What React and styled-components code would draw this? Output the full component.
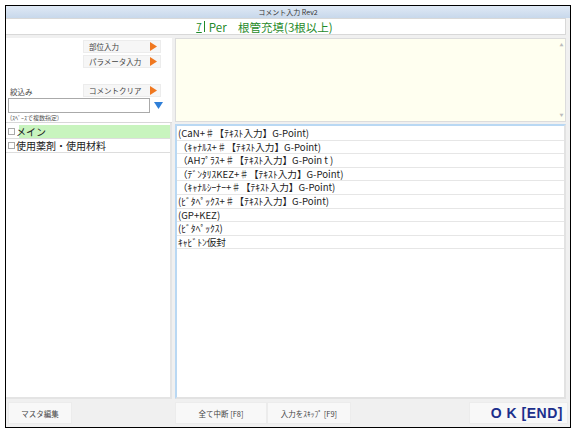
import React from "react";
import styled, { createGlobalStyle } from "styled-components";

const GlobalStyle = createGlobalStyle`
    html, body {
        margin: 0;
        padding: 0;
        background: #ffffff;
    }
    body {
        font-family: "Noto Sans CJK JP", "Noto Sans", sans-serif;
        color: #222;
    }
`;

const comments = [
    "(CaN+♯【ﾃｷｽﾄ入力】G-Point)",
    "（ｷｬﾅﾙｽ+♯【ﾃｷｽﾄ入力】G-Point)",
    "（AHﾌﾟﾗｽ+♯【ﾃｷｽﾄ入力】G-Poin t )",
    "（ﾃﾞﾝﾀﾘｽKEZ+♯【ﾃｷｽﾄ入力】G-Point)",
    "（ｷｬﾅﾙｼｰﾅｰ+♯【ﾃｷｽﾄ入力】G-Point)",
    "(ﾋﾞﾀﾍﾟｯｸｽ+♯【ﾃｷｽﾄ入力】G-Point)",
    "(GP+KEZ)",
    "(ﾋﾞﾀﾍﾟｯｸｽ)",
    "ｷｬﾋﾞﾄﾝ仮封",
];

function Arrow() {
    return (
        <svg width="7" height="9" viewBox="0 0 7 9">
            <path d="M0 0 L7 4.5 L0 9 Z" fill="#f07820" />
        </svg>
    );
}

function DownArrow() {
    return (
        <svg width="9" height="7" viewBox="0 0 9 7">
            <path d="M0 0 L9 0 L4.5 7 Z" fill="#2f7fd8" />
        </svg>
    );
}

export default function App() {
    return (
        <>
            <GlobalStyle />
            <Window>
                <TitleBar>コメント入力 Rev2</TitleBar>
                <Header>
                    <Tooth>7</Tooth>
                    <span>Per　根管充填(3根以上)</span>
                </Header>
                <Main>
                    <LeftPanel>
                        <Controls>
                            <ButtonStack>
                                <SideButton>
                                    <span>部位入力</span>
                                    <Arrow />
                                </SideButton>
                                <SideButton>
                                    <span>パラメータ入力</span>
                                    <Arrow />
                                </SideButton>
                            </ButtonStack>
                            <FilterRow>
                                <FilterLabel>絞込み</FilterLabel>
                                <SideButton>
                                    <span>コメントクリア</span>
                                    <Arrow />
                                </SideButton>
                            </FilterRow>
                            <InputRow>
                                <FilterInput />
                                <DownArrow />
                            </InputRow>
                            <Hint>(ｽﾍﾟｰｽで複数指定)</Hint>
                        </Controls>
                        <CategoryList>
                            <Category $active>
                                <Check />
                                メイン
                            </Category>
                            <Category>
                                <Check />
                                使用薬剤・使用材料
                            </Category>
                        </CategoryList>
                    </LeftPanel>
                    <RightPanel>
                        <Memo>
                            <MemoScroll>
                                <span>▲</span>
                                <span>▼</span>
                            </MemoScroll>
                        </Memo>
                        <CommentList>
                            {comments.map((c, i) => (
                                <CommentRow key={i}>{c}</CommentRow>
                            ))}
                        </CommentList>
                    </RightPanel>
                </Main>
                <Footer>
                    <FooterButton $width={64}>マスタ編集</FooterButton>
                    <FooterGap $width={103} />
                    <FooterButton $width={92}>全て中断 [F8]</FooterButton>
                    <FooterButton $width={84}>入力をｽｷｯﾌﾟ [F9]</FooterButton>
                    <FooterGap $width={118} />
                    <OkButton>O K [END]</OkButton>
                </Footer>
            </Window>
        </>
    );
}

const Window = styled.div`
    position: relative;
    margin: 5px 0 0 5px;
    width: 564px;
    height: 421px;
    border: 1px solid #000;
    background: #f0f0f0;
    display: flex;
    flex-direction: column;
`;

const TitleBar = styled.div`
    height: 12px;
    background: linear-gradient(#dfe9f5, #c8d8eb);
    font-size: 7px;
    line-height: 12px;
    text-align: center;
    color: #333;
`;

const Header = styled.div`
    height: 15px;
    margin: 0 4px 0 0;
    background: #fff;
    border: 1px solid #d8d8d8;
    border-left: none;
    display: flex;
    justify-content: center;
    align-items: center;
    gap: 4px;
    font-size: 11.5px;
    color: #1f8a2a;
    padding-right: 42px;
`;

const Tooth = styled.span`
    font-size: 10px;
    text-decoration: underline;
    border-right: 1px solid #1f8a2a;
    padding-right: 2px;
    line-height: 11px;
`;

const Main = styled.div`
    margin-top: 3px;
    height: 361px;
    display: flex;
    gap: 3px;
    padding-right: 4px;
`;

const LeftPanel = styled.div`
    width: 166px;
    display: flex;
    flex-direction: column;
    background: #fff;
`;

const Controls = styled.div`
    height: 85px;
    padding: 2px 0 0 2px;
    display: flex;
    flex-direction: column;
    border-bottom: 1px solid #d8d8d8;
    box-sizing: border-box;
`;

const ButtonStack = styled.div`
    display: flex;
    flex-direction: column;
    align-items: flex-end;
    gap: 2px;
    padding-right: 11px;
`;

const SideButton = styled.div`
    width: 78px;
    height: 13px;
    box-sizing: border-box;
    background: #f6f6f6;
    border: 1px solid #ececec;
    display: flex;
    align-items: center;
    justify-content: space-between;
    padding: 0 3px 0 5px;
    font-size: 7.5px;
    color: #444;
`;

const FilterRow = styled.div`
    margin-top: 16px;
    display: flex;
    justify-content: space-between;
    align-items: flex-end;
    padding-right: 11px;
`;

const FilterLabel = styled.span`
    font-size: 7.5px;
    color: #444;
    padding-left: 2px;
`;

const InputRow = styled.div`
    margin-top: 1px;
    display: flex;
    align-items: center;
    gap: 4px;
`;

const FilterInput = styled.div`
    width: 142px;
    height: 15px;
    box-sizing: border-box;
    border: 1px solid #aaa;
    background: #fff;
`;

const Hint = styled.div`
    font-size: 6px;
    line-height: 7px;
    color: #555;
    padding-left: 2px;
    margin-top: 1px;
`;

const CategoryList = styled.div`
    flex: 1;
    border-right: 2px solid #e4e4e4;
    border-bottom: 2px solid #e4e4e4;
    padding-top: 2px;
`;

const Category = styled.div`
    height: 13px;
    display: flex;
    align-items: center;
    font-size: 10px;
    color: #222;
    border-bottom: 1px solid #ddd;
    background: ${p => (p.$active ? "linear-gradient(90deg, #fff 0 13px, #c8f4be 13px)" : "#fff")};
`;

const Check = styled.span`
    width: 5px;
    height: 5px;
    border: 1px solid #aaa;
    margin: 0 1px 0 2px;
    background: #fff;
`;

const RightPanel = styled.div`
    flex: 1;
    display: flex;
    flex-direction: column;
    gap: 2px;
`;

const Memo = styled.div`
    height: 84px;
    background: #fffff0;
    border: 1px solid #dcdcdc;
    box-sizing: border-box;
    display: flex;
    justify-content: flex-end;
`;

const MemoScroll = styled.div`
    width: 7px;
    display: flex;
    flex-direction: column;
    justify-content: space-between;
    align-items: center;
    font-size: 4px;
    color: #bbb;
    padding: 3px 0;
`;

const CommentList = styled.div`
    flex: 1;
    background: #fff;
    border: 1px solid #cfcfcf;
    border-top: 2px solid #b9d8f3;
    border-left: 2px solid #b9d8f3;
    border-right: 2px solid #e2e2e2;
    border-bottom: 2px solid #e2e2e2;
    padding-top: 1px;
`;

const CommentRow = styled.div`
    height: 12.6px;
    line-height: 12.6px;
    overflow: hidden;
    border-bottom: 1px solid #e6e6e6;
    font-size: 9.6px;
    color: #222;
    white-space: nowrap;
    padding-left: 1px;
`;

const Footer = styled.div`
    margin-top: 3px;
    display: flex;
    align-items: center;
    height: 22px;
    padding-left: 2px;
`;

const FooterButton = styled.div`
    width: ${p => p.$width}px;
    height: 22px;
    box-sizing: border-box;
    background: #f8f8f8;
    border: 1px solid #ececec;
    display: flex;
    align-items: center;
    justify-content: center;
    font-size: 7.5px;
    color: #444;
`;

const FooterGap = styled.div`
    width: ${p => p.$width}px;
`;

const OkButton = styled.div`
    width: 99px;
    height: 22px;
    box-sizing: border-box;
    background: #f8f8f8;
    border: 1px solid #ececec;
    display: flex;
    align-items: center;
    justify-content: flex-end;
    padding-right: 4px;
    font-family: "Liberation Sans", Arial, sans-serif;
    font-weight: bold;
    font-size: 14px;
    color: #1c2f8c;
    letter-spacing: 0.5px;
    white-space: nowrap;
`;
